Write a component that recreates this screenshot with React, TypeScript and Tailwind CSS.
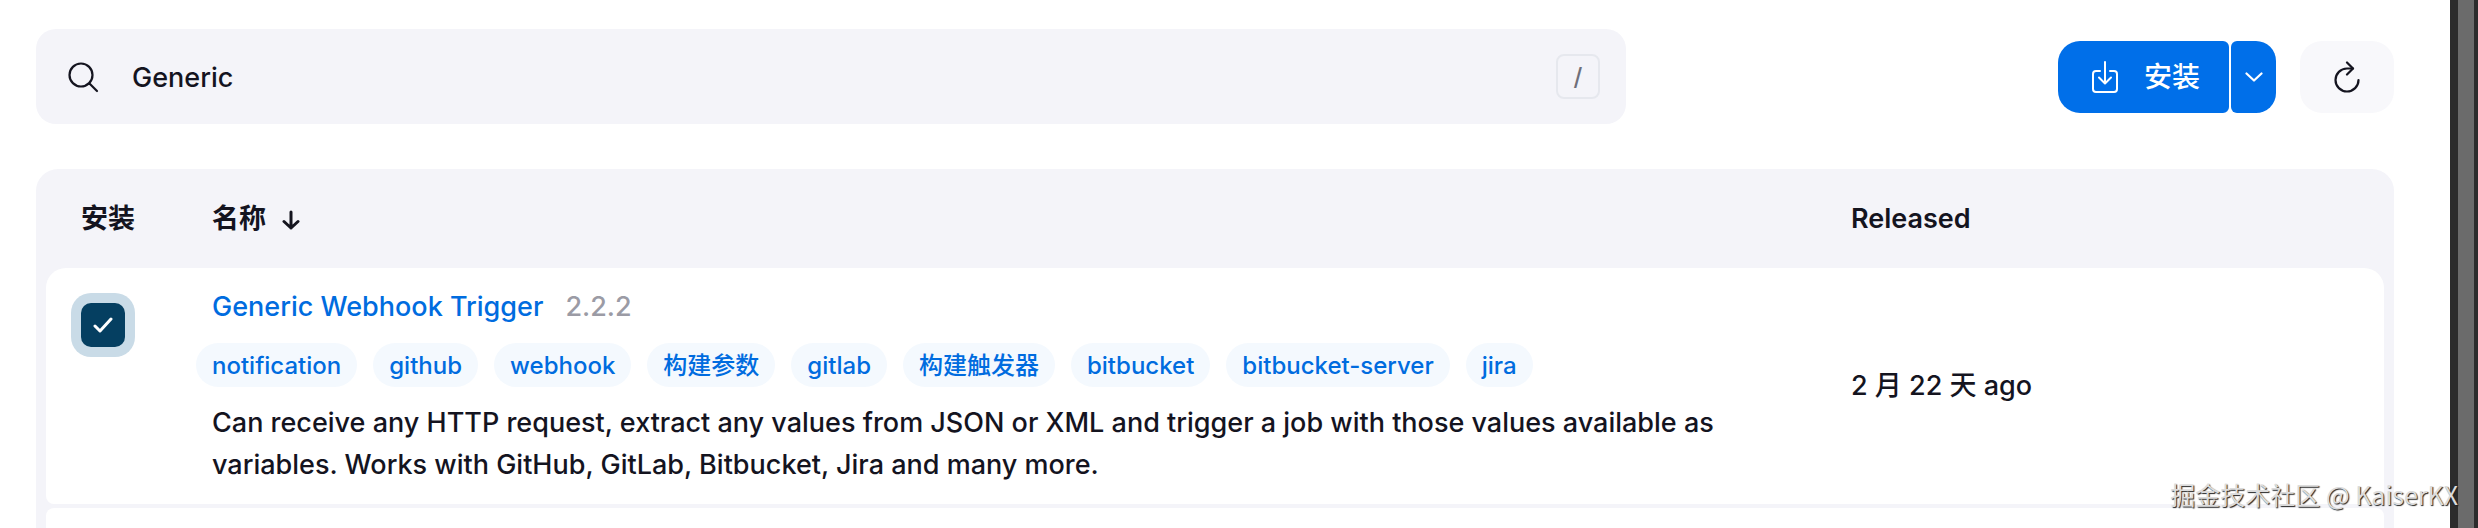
import React, { useState } from 'react';

const labels = [
    'notification',
    'github',
    'webhook',
    '构建参数',
    'gitlab',
    '构建触发器',
    'bitbucket',
    'bitbucket-server',
    'jira',
];

function SearchBar() {
    const [query, setQuery] = useState('Generic');

    return (
        <label className="flex h-[95px] w-[1590px] items-center rounded-[20px] bg-[#f4f4f9] pr-[26px] pl-8">
            <svg className="h-8 w-8 shrink-0" viewBox="0 0 32 32" fill="none" stroke="currentColor" strokeWidth="2.2" strokeLinecap="round">
                <circle cx="13" cy="14" r="11.5" />
                <path d="M21.5 22.5L29 30" />
            </svg>
            <input
                type="text"
                aria-label="Search"
                className="ml-8 min-w-0 flex-1 bg-transparent pt-1 font-medium outline-none"
                value={query}
                onChange={(e) => setQuery(e.target.value)}
            />
            <kbd className="flex h-[45px] w-11 items-center justify-center rounded-lg border-2 border-[#e6e8ee] font-[Inter] text-2xl font-medium text-[#6f6f7a]">
                /
            </kbd>
        </label>
    );
}

function Actions() {
    return (
        <div className="flex items-center">
            <button className="flex h-[72px] items-center rounded-l-[22px] rounded-r-md bg-[#006fe9] pr-[29px] pl-[34px] font-medium text-white">
                <svg className="h-8 w-[26px]" viewBox="0 0 26 32" fill="none" stroke="currentColor" strokeWidth="2" strokeLinecap="round" strokeLinejoin="round">
                    <path d="M8 10H4a3 3 0 0 0-3 3v15a3 3 0 0 0 3 3h18a3 3 0 0 0 3-3V13a3 3 0 0 0-3-3h-4" />
                    <path d="M13 1v21M7 16.5l6 6 6-6" />
                </svg>
                <span className="ml-[26px] text-[28px]">安装</span>
            </button>
            <button aria-label="More" className="ml-0.5 flex h-[72px] w-[45px] items-center justify-center rounded-l-md rounded-r-[20px] bg-[#006fe9] text-white">
                <svg className="h-2.5 w-[18px]" viewBox="0 0 18 10" fill="none" stroke="currentColor" strokeWidth="2.2" strokeLinecap="round" strokeLinejoin="round">
                    <path d="M1.5 1.5L9 8.5l7.5-7" />
                </svg>
            </button>
            <button aria-label="Refresh" className="ml-6 flex h-[72px] w-[94px] items-center justify-center rounded-[22px] bg-[#f8f8fb]">
                <svg className="h-8 w-[26px]" viewBox="0 0 26 32" fill="none" stroke="currentColor" strokeWidth="2.2" strokeLinecap="round" strokeLinejoin="round">
                    <path d="M19 7.5H13A11.5 11.5 0 1 0 24.5 19" />
                    <path d="M13 1.5l6 6-6 6" />
                </svg>
            </button>
        </div>
    );
}

function PluginTable() {
    const [checked, setChecked] = useState(true);

    return (
        <div className="mt-[45px] rounded-t-[22px] bg-[#f4f4f9] px-2.5">
            <table className="w-full table-fixed border-separate border-spacing-0 text-left">
                <colgroup>
                    <col className="w-[154px]" />
                    <col />
                    <col className="w-[545px]" />
                </colgroup>
                <thead>
                    <tr className="h-[99px]">
                        <th className="pt-0.5 pl-[35px] font-semibold">安装</th>
                        <th className="pt-0.5 pl-3 font-semibold">
                            <button className="flex items-center gap-4">
                                名称
                                <svg className="h-5 w-[18px]" viewBox="0 0 18 20" fill="none" stroke="currentColor" strokeWidth="3" strokeLinecap="round" strokeLinejoin="round">
                                    <path d="M9 2v16M2 11.5l7 6.5 7-6.5" />
                                </svg>
                            </button>
                        </th>
                        <th className="pt-0.5 pl-3 font-semibold">Released</th>
                    </tr>
                </thead>
                <tbody>
                    <tr className="h-[236px]">
                        <td className="rounded-tl-[20px] rounded-bl-lg bg-white pt-[25px] pl-[25px] align-top">
                            <label className="relative flex h-16 w-16 items-center justify-center rounded-[20px] bg-[#c9dbe7]">
                                <input
                                    type="checkbox"
                                    aria-label="Generic Webhook Trigger"
                                    className="h-11 w-11 appearance-none rounded-[10px] bg-[#053f61]"
                                    checked={checked}
                                    onChange={() => setChecked(!checked)}
                                />
                                {checked && (
                                    <svg className="pointer-events-none absolute h-4 w-5" viewBox="0 0 20 16" fill="none" stroke="white" strokeWidth="3" strokeLinecap="round" strokeLinejoin="round">
                                        <path d="M2 9l5 5L18 2" />
                                    </svg>
                                )}
                            </label>
                        </td>
                        <td className="bg-white pt-[18px] pl-3 align-top font-medium">
                            <div className="flex items-center gap-[22px] leading-[42px]">
                                <a href="#" className="text-[#006cdf]">Generic Webhook Trigger</a>
                                <span className="text-[#9b9ba5]">2.2.2</span>
                            </div>
                            <div className="mt-[15px] -ml-4 flex gap-4">
                                {labels.map((label) => (
                                    <a key={label} href="#" className="flex h-11 items-center rounded-full bg-[#f4f9fe] px-4 pt-0.5 text-2xl text-[#006cdf]">
                                        {label}
                                    </a>
                                ))}
                            </div>
                            <p className="mt-[15px] max-w-[1560px] leading-[42px]">
                                Can receive any HTTP request, extract any values from JSON or XML and trigger a job with those values available as
                                variables. Works with GitHub, GitLab, Bitbucket, Jira and many more.
                            </p>
                        </td>
                        <td className="rounded-tr-[20px] rounded-br-lg bg-white pl-3 font-medium">2 月 22 天 ago</td>
                    </tr>
                    <tr className="h-1">
                        <td colSpan={3}></td>
                    </tr>
                    <tr className="h-[21px]">
                        <td colSpan={3} className="rounded-t-lg bg-white"></td>
                    </tr>
                </tbody>
            </table>
        </div>
    );
}

export default function App() {
    return (
        <div className="relative flex overflow-hidden bg-white font-['Inter','Noto_Sans_CJK_SC',sans-serif] text-[27px] text-[#14141f]">
            <main className="min-w-0 flex-1 pt-[29px] pr-14 pl-9">
                <div className="flex items-center justify-between">
                    <SearchBar />
                    <Actions />
                </div>
                <PluginTable />
            </main>
            <div className="w-7 border-r-4 border-l-8 border-[#2c2c2c] bg-[#6b6b6b]"></div>
            <span className="absolute right-5 bottom-[17px] font-['Noto_Sans_CJK_SC',sans-serif] text-[25px] leading-9 text-[#dcdcdc] [text-shadow:1px_1px_1px_#222]">
                掘金技术社区 @ KaiserKX
            </span>
        </div>
    );
}
